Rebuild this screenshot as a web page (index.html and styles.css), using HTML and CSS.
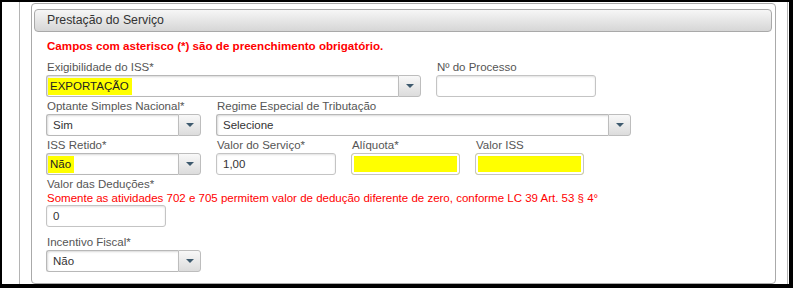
FILE: index.html
```html
<!DOCTYPE html>
<html lang="pt-BR">
<head>
  <meta charset="UTF-8">
  <title>Prestação do Serviço</title>
  <link rel="stylesheet" href="styles.css">
</head>
<body>
  <div class="frame">
    <div class="page">
      <div class="container">
        <div class="panel">
          <div class="panel-header">Prestação do Serviço</div>
          <div class="panel-body">
            <p class="note-required">Campos com asterisco (*) são de preenchimento obrigatório.</p>

            <div class="row">
              <div class="field">
                <label>Exigibilidade do ISS*</label>
                <div class="combo w-exig">
                  <div class="combo-value"><span class="mark">EXPORTAÇÃO</span></div>
                  <span class="combo-btn"><i class="caret"></i></span>
                </div>
              </div>
              <div class="field">
                <label>Nº do Processo</label>
                <input class="text w-proc" type="text">
              </div>
            </div>

            <div class="row">
              <div class="field">
                <label>Optante Simples Nacional*</label>
                <div class="combo w-small">
                  <div class="combo-value">Sim</div>
                  <span class="combo-btn"><i class="caret"></i></span>
                </div>
              </div>
              <div class="field">
                <label>Regime Especial de Tributação</label>
                <div class="combo w-regime">
                  <div class="combo-value">Selecione</div>
                  <span class="combo-btn"><i class="caret"></i></span>
                </div>
              </div>
            </div>

            <div class="row">
              <div class="field">
                <label>ISS Retido*</label>
                <div class="combo w-small">
                  <div class="combo-value"><span class="mark">Não</span></div>
                  <span class="combo-btn"><i class="caret"></i></span>
                </div>
              </div>
              <div class="field">
                <label>Valor do Serviço*</label>
                <input class="text w-valor" type="text" value="1,00">
              </div>
              <div class="field">
                <label>Alíquota*</label>
                <input class="text w-aliq filled" type="text">
              </div>
              <div class="field">
                <label>Valor ISS</label>
                <input class="text w-aliq filled" type="text">
              </div>
            </div>

            <div class="row">
              <div class="field">
                <label>Valor das Deduções*</label>
                <span class="hint">Somente as atividades 702 e 705 permitem valor de dedução diferente de zero, conforme LC 39 Art. 53 § 4°</span>
                <input class="text w-valor" type="text" value="0">
              </div>
            </div>

            <div class="row row-last">
              <div class="field">
                <label>Incentivo Fiscal*</label>
                <div class="combo w-small">
                  <div class="combo-value">Não</div>
                  <span class="combo-btn"><i class="caret"></i></span>
                </div>
              </div>
            </div>
          </div>
        </div>
      </div>
    </div>
  </div>
</body>
</html>
```

FILE: styles.css
```css
:root {
  --label: #555555;
  --text: #333333;
  --border: #aaaaaa;
  --input-border: #c4c4c4;
  --red: #ff0000;
  --mark: #ffff00;
  --caret: #3e5a6e;
}

* {
  box-sizing: border-box;
  margin: 0;
  padding: 0;
}

body {
  background: #000;
  font-family: "Liberation Sans", Arial, sans-serif;
  font-size: 11.5px;
  color: var(--text);
  width: 793px;
  height: 288px;
  overflow: hidden;
}

.frame {
  padding: 2px 4px 4px 2px;
  height: 288px;
}

.page {
  background: #fff;
  height: 282px;
  padding: 0 1px 0 17px;
  overflow: hidden;
}

.container {
  border-left: 1px solid #b4b4b4;
  border-right: 1px solid #b4b4b4;
  height: 282px;
  padding: 1px 11px 0 11px;
}

.panel {
  border: 1px solid var(--border);
  border-radius: 4px;
  height: 281px;
  overflow: hidden;
}

.panel-header {
  height: 23px;
  margin: 5px 3px 0 2px;
  line-height: 21px;
  padding-left: 12px;
  font-size: 12.3px;
  color: #333;
  border: 1px solid #a9a9a9;
  border-radius: 4px;
  background: linear-gradient(#f6f6f6, #d6d6d6);
}

.panel-body {
  padding: 6px 0 0 15px;
}

.note-required {
  color: var(--red);
  font-weight: bold;
  font-size: 11.6px;
  line-height: 16px;
  margin-bottom: 6px;
}

.row {
  display: flex;
  gap: 16px;
  margin-bottom: 2px;
}

.field {
  display: flex;
  flex-direction: column;
}

.field label {
  color: var(--label);
  line-height: 15px;
}

.hint {
  color: var(--red);
  line-height: 12px;
  margin-bottom: 1px;
}

.text,
.combo {
  height: 22px;
  margin-left: -1px;
}

.text {
  border: 1px solid var(--input-border);
  border-radius: 3px;
  box-shadow: inset 0 1px 2px rgba(0, 0, 0, 0.12);
  font-family: inherit;
  font-size: 11.5px;
  color: var(--text);
  padding: 0 6px;
  outline: none;
}

.text.filled {
  background: var(--mark);
  box-shadow: inset 0 0 0 2px #fff, inset 0 1px 3px rgba(0, 0, 0, 0.15);
}

.combo {
  display: flex;
}

.combo-value {
  flex: 1;
  border: 1px solid #b8b8b8;
  border-right: none;
  border-radius: 3px 0 0 3px;
  box-shadow: inset 1px 1px 2px rgba(0, 0, 0, 0.15);
  line-height: 20px;
  padding-left: 6px;
  color: var(--text);
}

.combo-value .mark {
  background: var(--mark);
  display: inline-block;
  line-height: 17px;
  padding: 0 3px 0 2px;
  margin-left: -5px;
  color: #222;
}

.combo-btn {
  width: 23px;
  border: 1px solid #bdbdbd;
  border-radius: 0 3px 3px 0;
  background: linear-gradient(#f8f8f8, #dcdcdc);
  display: flex;
  align-items: center;
  justify-content: center;
}

.caret {
  width: 0;
  height: 0;
  border-left: 4px solid transparent;
  border-right: 4px solid transparent;
  border-top: 4px solid var(--caret);
}

.w-exig { width: 375px; }
.w-proc { width: 160px; }
.w-small { width: 155px; }
.w-regime { width: 415px; }
.w-valor { width: 120px; }
.w-aliq { width: 109px; }

.row-last {
  margin-top: 8px;
}
```
